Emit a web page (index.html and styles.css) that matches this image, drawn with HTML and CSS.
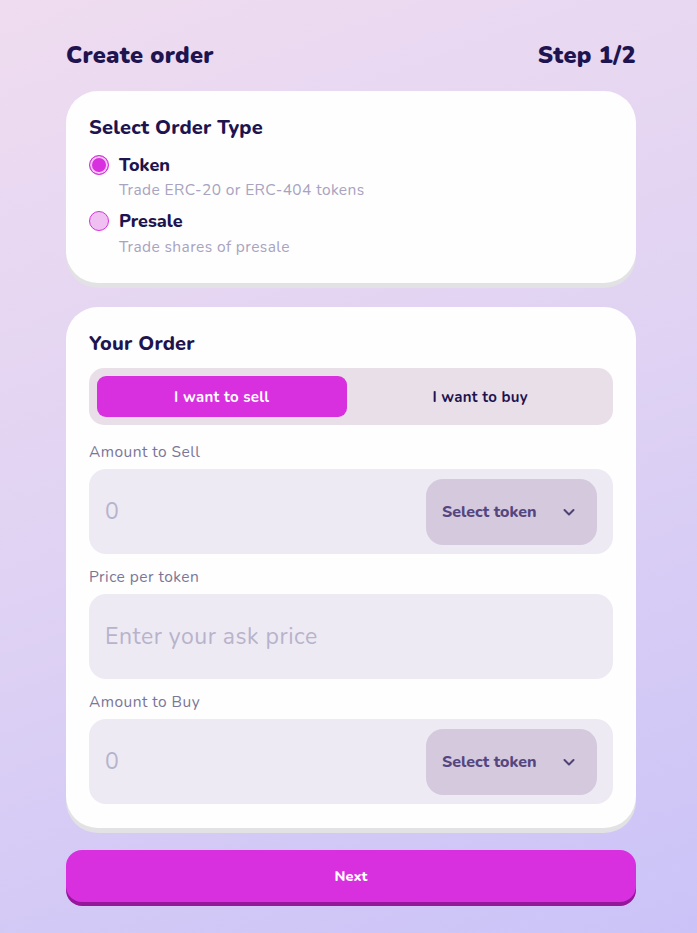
FILE: index.html
```html
<!DOCTYPE html>
<html lang="en">
<head>
<meta charset="utf-8">
<title>Create order</title>
<link rel="stylesheet" href="styles.css">
</head>
<body>
<main class="page">
  <header class="head">
    <h1 class="head-title">Create order</h1>
    <span class="head-step">Step 1/2</span>
  </header>

  <section class="card card-type">
    <h2 class="card-title">Select Order Type</h2>
    <div class="option">
      <span class="radio radio-on"></span>
      <span class="option-label">Token</span>
    </div>
    <p class="option-desc">Trade ERC-20 or ERC-404 tokens</p>
    <div class="option option-2">
      <span class="radio"></span>
      <span class="option-label">Presale</span>
    </div>
    <p class="option-desc option-desc-2">Trade shares of presale</p>
  </section>

  <section class="card card-order">
    <h2 class="card-title">Your Order</h2>
    <div class="toggle">
      <button class="toggle-btn toggle-active">I want to sell</button>
      <button class="toggle-btn">I want to buy</button>
    </div>

    <label class="field-label">Amount to Sell</label>
    <div class="field">
      <span class="field-value">0</span>
      <button class="select">Select token
        <svg class="chev" width="14" height="14" viewBox="0 0 14 14"><path d="M2.5 5 L7 9.5 L11.5 5" fill="none" stroke="#4f4274" stroke-width="2" stroke-linecap="round" stroke-linejoin="round"/></svg>
      </button>
    </div>

    <label class="field-label">Price per token</label>
    <div class="field">
      <span class="field-value">Enter your ask price</span>
    </div>

    <label class="field-label">Amount to Buy</label>
    <div class="field">
      <span class="field-value">0</span>
      <button class="select">Select token
        <svg class="chev" width="14" height="14" viewBox="0 0 14 14"><path d="M2.5 5 L7 9.5 L11.5 5" fill="none" stroke="#4f4274" stroke-width="2" stroke-linecap="round" stroke-linejoin="round"/></svg>
      </button>
    </div>
  </section>

  <button class="next">Next</button>
</main>
</body>
</html>
```

FILE: styles.css
```css
* { box-sizing: border-box; }
html, body { margin: 0; padding: 0; }
body {
  min-height: 933px;
  background: linear-gradient(160deg, #efdcf0 0%, #dfd2f3 50%, #cbc3f8 100%);
  font-family: "Nunito", "Lato", "Noto Sans", sans-serif;
  color: #1d1450;
}
.page {
  width: 570px;
  margin-left: 66px;
  padding-top: 40px;
}
.head {
  display: flex;
  justify-content: space-between;
  align-items: center;
  height: 30px;
  margin-bottom: 21px;
}
.head-title, .head-step {
  margin: 0;
  font-size: 23.5px;
  font-weight: 900;
  letter-spacing: 0.3px;
  color: #1d1450;
  line-height: 30px;
}
.card {
  background: #fefefe;
  border-radius: 32px;
  box-shadow: 0 5px 0 #e2e1e4;
  padding: 24px 24px 26px 23px;
}
.card-title {
  margin: 0;
  font-size: 20px;
  font-weight: 800;
  line-height: 26px;
  letter-spacing: 0.2px;
  color: #1d1450;
}
.option {
  display: flex;
  align-items: center;
  gap: 10px;
  margin-top: 12px;
  height: 24px;
}
.option-2 { margin-top: 9px; }
.radio {
  width: 20px;
  height: 20px;
  border-radius: 50%;
  border: 1.5px solid #d630dc;
  background: #f1c0f3;
}
.radio-on {
  background: #d82fdf;
  box-shadow: inset 0 0 0 2px #f6c8f7;
}
.option-label {
  font-size: 18px;
  font-weight: 800;
  color: #1d1450;
}
.option-desc {
  margin: 3px 0 0 30px;
  font-size: 15.5px;
  line-height: 20px;
  letter-spacing: 0.4px;
  color: #a8a3bf;
}
.option-desc-2 { margin-top: 4px; }
.card-order {
  margin-top: 24px;
  padding: 24px 23px 24px 23px;
}
.toggle {
  display: grid;
  grid-template-columns: 1fr 1fr;
  gap: 9px;
  margin-top: 11px;
  padding: 8px;
  background: #e9dfe8;
  border-radius: 15px;
}
.toggle-btn {
  height: 41px;
  border: none;
  border-radius: 9px;
  background: transparent;
  font-family: inherit;
  font-size: 15px;
  font-weight: 700;
  letter-spacing: 0.3px;
  color: #1d1450;
}
.toggle-active {
  background: #d82fdf;
  color: #ffffff;
}
.field-label {
  display: block;
  margin-top: 17px;
  font-size: 15.5px;
  line-height: 20px;
  letter-spacing: 0.45px;
  color: #7b7697;
}
.field-label + .field { margin-top: 7px; }
.field ~ .field-label { margin-top: 13px; }
.field {
  display: flex;
  align-items: center;
  justify-content: space-between;
  height: 85px;
  padding: 10px 16px 10px 16px;
  background: #edeaf4;
  border-radius: 17px;
}
.field-value {
  font-size: 23px;
  letter-spacing: 0.5px;
  color: #b8b3cb;
}
.select {
  display: flex;
  align-items: center;
  justify-content: space-between;
  width: 171px;
  height: 66px;
  padding: 0 21px 0 16px;
  border: none;
  border-radius: 17px;
  background: #d5c9de;
  font-family: inherit;
  font-size: 16px;
  font-weight: 800;
  color: #55467f;
}
.next {
  display: block;
  width: 100%;
  height: 52px;
  margin-top: 22px;
  border: none;
  border-radius: 16px;
  background: #d82fdf;
  box-shadow: 0 4px 0 #95189b;
  font-family: inherit;
  font-size: 14.5px;
  font-weight: 800;
  color: #ffffff;
}
```
